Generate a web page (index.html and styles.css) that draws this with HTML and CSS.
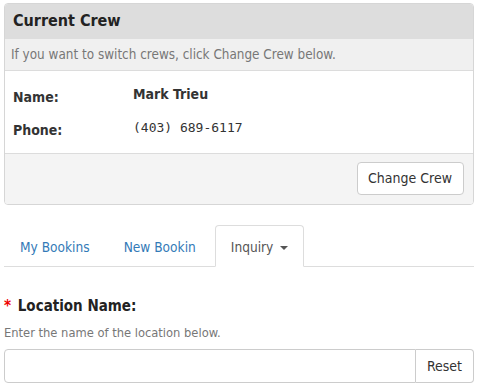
FILE: index.html
```html
<!DOCTYPE html>
<html>
	<head>
		<meta charset="UTF-8">
		<title>Current Crew</title>
		<link rel="stylesheet" href="styles.css">
	</head>
	<body>
		<div id="page">
			<div class="panel">
				<div class="panel-title">Current Crew</div>
				<div class="panel-note">If you want to switch crews, click Change Crew below.</div>
				<div class="panel-body">
					<div class="row">
						<span class="label">Name:</span>
						<span class="value name">Mark Trieu</span>
					</div>
					<div class="row">
						<span class="label">Phone:</span>
						<span class="value phone">(403) 689-6117</span>
					</div>
				</div>
				<div class="panel-foot">
					<a class="btn" href="javascript:;">Change Crew</a>
				</div>
			</div>
			<ul class="tabs">
				<li><a href="javascript:;">My Bookins</a></li>
				<li><a href="javascript:;">New Bookin</a></li>
				<li class="active"><a href="javascript:;">Inquiry <span class="caret"></span></a></li>
			</ul>
			<div class="field">
				<div class="field-label"><span class="req">*</span> Location Name:</div>
				<div class="field-help">Enter the name of the location below.</div>
				<div class="input-group">
					<input type="text" class="input">
					<a class="btn addon" href="javascript:;">Reset</a>
				</div>
			</div>
		</div>
	</body>
</html>
```
FILE: styles.css
```css
*{
	margin: 0;
	padding: 0;
	box-sizing: border-box;
}
body{
	font-family: "DejaVu Sans Condensed", "DejaVu Sans", sans-serif;
	font-size: 13px;
	color: #333;
	background: #fff;
}
#page{
	padding: 3px 4px 0 4px;
}
.panel{
	border: 1px solid #d6d6d6;
	border-radius: 4px;
	overflow: hidden;
}
.panel-title{
	height: 35px;
	line-height: 34px;
	padding: 0 8px;
	background: #dddddd;
	font-size: 16px;
	font-weight: bold;
	color: #222;
}
.panel-note{
	height: 32px;
	line-height: 32px;
	padding: 0 6px;
	background: #f0f0f0;
	border-bottom: 1px solid #dcdcdc;
	color: #777;
	font-size: 13.4px;
}
.panel-body{
	padding: 6px 8px 0 8px;
	height: 82px;
}
.row{
	display: flex;
	height: 33px;
	align-items: center;
}
.label{
	width: 120px;
	font-weight: bold;
	font-size: 14px;
	padding-top: 6px;
}
.value.name{
	font-weight: bold;
	font-size: 14px;
}
.value.phone{
	font-family: "DejaVu Sans Mono", "Liberation Mono", monospace;
	font-size: 13px;
	padding-top: 2px;
}
.panel-foot{
	border-top: 1px solid #dcdcdc;
	background: #f4f4f4;
	height: 51px;
	display: flex;
	justify-content: flex-end;
	align-items: center;
	padding: 0 9px 2px 0;
}
.btn{
	display: inline-block;
	border: 1px solid #ccc;
	border-radius: 4px;
	background: #fff;
	color: #333;
	text-decoration: none;
	font-size: 14px;
	line-height: 31px;
	padding: 0 11px 0 10px;
}
.tabs{
	list-style: none;
	display: flex;
	margin-top: 20px;
	border-bottom: 1px solid #ddd;
	height: 42px;
}
.tabs li{
	margin-bottom: -1px;
}
.tabs a{
	display: block;
	height: 42px;
	line-height: 42px;
	padding: 0 15px;
	color: #337ab7;
	text-decoration: none;
	font-size: 13.6px;
	border: 1px solid transparent;
	border-radius: 4px 4px 0 0;
	margin-right: 2px;
}
.tabs li.active a{
	color: #555;
	border-color: #ddd;
	border-bottom-color: #fff;
	background: #fff;
	margin-left: 1px;
}
.caret{
	display: inline-block;
	width: 0;
	height: 0;
	margin-left: 3px;
	vertical-align: middle;
	border-top: 4px solid #555;
	border-left: 4px solid transparent;
	border-right: 4px solid transparent;
}
.field{
	padding-top: 29px;
}
.field-label{
	font-size: 15px;
	font-weight: bold;
	color: #222;
	line-height: 20px;
}
.req{
	color: #e00;
	margin-right: 2px;
}
.field-help{
	font-size: 12.8px;
	color: #777;
	margin-top: 9px;
	line-height: 16px;
}
.input-group{
	display: flex;
	margin-top: 8px;
	height: 34px;
}
.input{
	flex: 1;
	height: 34px;
	border: 1px solid #ccc;
	border-radius: 4px 0 0 4px;
	outline: none;
}
.btn.addon{
	border-left: none;
	border-radius: 0 4px 4px 0;
	line-height: 32px;
	padding: 0 11px;
}
```
